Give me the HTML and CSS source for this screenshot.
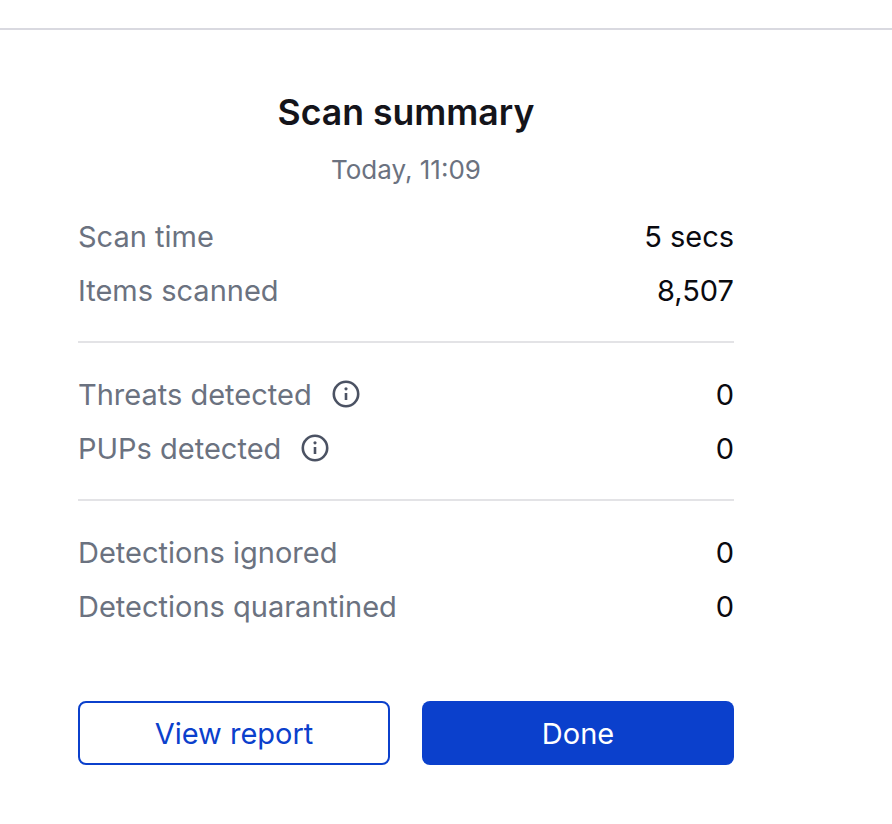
FILE: index.html
```html
<!DOCTYPE html>
<html lang="en">
<head>
  <meta charset="UTF-8">
  <title>Scan summary</title>
  <link rel="stylesheet" href="styles.css">
</head>
<body>
  <div class="top-bar"></div>

  <main class="summary">
    <h1 class="summary-title">Scan summary</h1>
    <p class="summary-date">Today, 11:09</p>

    <section class="group">
      <div class="row"><span class="label">Scan time</span><span class="value">5 secs</span></div>
      <div class="row"><span class="label">Items scanned</span><span class="value">8,507</span></div>
    </section>

    <section class="group">
      <div class="row">
        <span class="label">Threats detected
          <svg class="info-icon" viewBox="0 0 28 28"><circle cx="14" cy="14" r="12.2"/><path d="M14 13v7"/><circle class="dot" cx="14" cy="8.8" r="1.6"/></svg>
        </span>
        <span class="value">0</span>
      </div>
      <div class="row">
        <span class="label">PUPs detected
          <svg class="info-icon" viewBox="0 0 28 28"><circle cx="14" cy="14" r="12.2"/><path d="M14 13v7"/><circle class="dot" cx="14" cy="8.8" r="1.6"/></svg>
        </span>
        <span class="value">0</span>
      </div>
    </section>

    <section class="group">
      <div class="row"><span class="label">Detections ignored</span><span class="value">0</span></div>
      <div class="row"><span class="label">Detections quarantined</span><span class="value">0</span></div>
    </section>

    <div class="actions">
      <button class="btn btn-outline">View report</button>
      <button class="btn btn-primary">Done</button>
    </div>
  </main>
</body>
</html>
```

FILE: styles.css
```css
* {
  margin: 0;
  padding: 0;
  box-sizing: border-box;
  font-family: Inter, 'Liberation Sans', sans-serif;
}

body {
  background-color: white;
  color: #0a0a0f;
}

.top-bar {
  margin-top: 28px;
  height: 2px;
  background-color: #d9d9e0;
}

.summary {
  width: 656px;
  margin-left: 78px;
  padding-top: 61px;
}

.summary-title {
  font-size: 35.6px;
  line-height: 44px;
  font-weight: 600;
  text-align: center;
  color: #14141a;
}

.summary-date {
  margin-top: 17px;
  font-size: 26px;
  line-height: 36px;
  text-align: center;
  color: #6b7280;
}

.group {
  padding: 25px 0 23px;
  border-bottom: 2px solid #e3e3e6;
}

.group:first-of-type {
  padding-top: 22px;
}

.group:last-of-type {
  border-bottom: none;
}

.row {
  display: flex;
  justify-content: space-between;
  align-items: center;
  height: 54px;
  padding-bottom: 2px;
  font-size: 29px;
}

.label {
  display: flex;
  align-items: center;
  gap: 20px;
  color: #6b7280;
}

.value {
  color: #0a0a0f;
}

.info-icon {
  width: 28px;
  height: 28px;
  fill: none;
  stroke: #4b5263;
  stroke-width: 2.6;
}

.info-icon .dot {
  fill: #4b5263;
  stroke: none;
}

.actions {
  display: grid;
  grid-template-columns: 1fr 1fr;
  gap: 32px;
  margin-top: 44px;
}

.btn {
  height: 64px;
  padding-top: 1px;
  border-radius: 8px;
  font-size: 29px;
  cursor: pointer;
}

.btn-outline {
  background-color: white;
  border: 2px solid #0b40cc;
  color: #0b40cc;
}

.btn-primary {
  background-color: #0b40cc;
  border: none;
  color: white;
}
```
